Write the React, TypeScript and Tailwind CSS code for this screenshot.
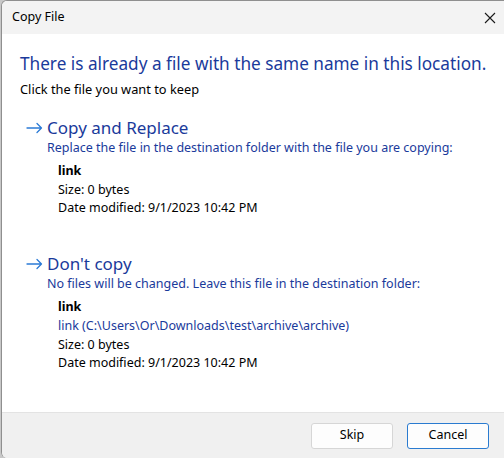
import React from 'react';

const font = { fontFamily: '"Segoe UI", "Noto Sans", sans-serif' };

const Arrow: React.FC = () => (
  <svg width="17" height="12" viewBox="0 0 17 12" fill="none" stroke="#2b7bd6" strokeWidth="1.3" strokeLinecap="round" strokeLinejoin="round">
    <path d="M1 6h14.5M11 1.5l4.5 4.5-4.5 4.5" />
  </svg>
);

interface OptionProps {
  title: string;
  desc: string;
  path?: string;
}

const Option: React.FC<OptionProps> = ({ title, desc, path }) => (
  <div className="flex flex-col pl-[6px]">
    <div className="flex items-center gap-[4px]">
      <Arrow />
      <span className="text-[17px] leading-[22px] text-[#1a3a9b]">{title}</span>
    </div>
    <div className="pl-[21px] text-[12.5px] leading-[18px] text-[#1a3a9b]">{desc}</div>
    <div className="pl-[32px] pt-[5px] text-[12.5px] leading-[18.7px] text-black">
      <div className="font-bold">link</div>
      {path && <div className="text-[#1a3a9b]">{path}</div>}
      <div>Size: 0 bytes</div>
      <div>Date modified: 9/1/2023 10:42 PM</div>
    </div>
  </div>
);

export default function App() {
  return (
    <div className="w-[504px] h-[458px] bg-[#c8c8c8] overflow-hidden" style={font}>
      <div className="ml-[1px] h-full flex flex-col bg-white border-l border-t border-[#8f8f8f] rounded-tl-[6px] rounded-bl-[6px] overflow-hidden">
        <div className="h-[33px] shrink-0 bg-[#f3f3f3] flex items-center justify-between pl-[10px] pr-[8px]">
          <span className="text-[12.5px] text-black">Copy File</span>
          <svg width="12" height="12" viewBox="0 0 12 12" stroke="#1a1a1a" strokeWidth="1.1">
            <path d="M1 1l10 10M11 1L1 11" />
          </svg>
        </div>
        <div className="flex-1 flex flex-col pl-[18px] pt-[18px]">
          <div className="text-[17.2px] leading-[24px] text-[#1a3a9b]">There is already a file with the same name in this location.</div>
          <div className="mt-[4px] text-[12.8px] leading-[18px] text-black">Click the file you want to keep</div>
          <div className="mt-[19px] flex flex-col gap-[35px]">
            <Option
              title="Copy and Replace"
              desc="Replace the file in the destination folder with the file you are copying:"
            />
            <Option
              title="Don't copy"
              desc="No files will be changed. Leave this file in the destination folder:"
              path="link (C:\Users\Or\Downloads\test\archive\archive)"
            />
          </div>
        </div>
        <div className="h-[46px] shrink-0 bg-[#f0f0f0] border-t border-[#e3e3e3] flex items-center justify-end gap-[14px] pr-[15px]">
          <button className="w-[82px] h-[26px] bg-[#fdfdfd] border border-[#d6d6d6] rounded-[3px] text-[12.5px] text-black">Skip</button>
          <button className="w-[82px] h-[26px] bg-[#fdfdfd] border border-[#2a7bd0] rounded-[3px] text-[12.5px] text-black">Cancel</button>
        </div>
      </div>
    </div>
  );
}
